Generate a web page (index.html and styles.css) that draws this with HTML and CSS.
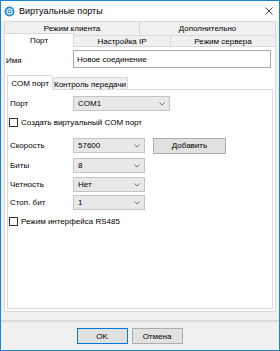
FILE: index.html
```html
<!DOCTYPE html>
<html lang="ru">
<head>
<meta charset="utf-8">
<title>Виртуальные порты</title>
<link rel="stylesheet" href="styles.css">
</head>
<body>
<div class="window">
  <div class="titlebar">
    <svg class="app-icon" width="11" height="11" viewBox="0 0 11 11">
      <circle cx="5.5" cy="5.5" r="5" fill="#2f86d6"/>
      <circle cx="5.5" cy="5.5" r="2.6" fill="none" stroke="#dbeeff" stroke-width="1.2"/>
      <circle cx="5.5" cy="5.5" r="1" fill="#ffffff"/>
    </svg>
    <span class="title">Виртуальные порты</span>
    <svg class="close" width="8" height="8" viewBox="0 0 8 8">
      <path d="M0.5 0.5 L7.5 7.5 M7.5 0.5 L0.5 7.5" stroke="#333" stroke-width="0.9"/>
    </svg>
  </div>
  <div class="content">
    <div class="tabrow row1">
      <div class="tab half">Режим клиента</div>
      <div class="tab half">Дополнительно</div>
    </div>
    <div class="tabrow row2">
      <div class="tab active t-port">Порт</div>
      <div class="tab t-ip">Настройка IP</div>
      <div class="tab t-srv">Режим сервера</div>
    </div>
    <div class="panel">
      <div class="name-row">
        <span class="name-label">Имя</span>
        <div class="textbox">Новое соединение</div>
      </div>
      <div class="itabrow">
        <div class="itab active">COM порт</div>
        <div class="itab">Контроль передачи</div>
      </div>
      <div class="ipanel">
        <div class="row r-port">
          <span class="lbl">Порт</span>
          <div class="select wide"><span>COM1</span><svg class="chev" width="6" height="4" viewBox="0 0 6 4"><path d="M0.5 0.5 L3 3 L5.5 0.5" fill="none" stroke="#666" stroke-width="0.9"/></svg></div>
        </div>
        <div class="row check r-virt">
          <span class="box"></span><span>Создать виртуальный COM порт</span>
        </div>
        <div class="row r-speed">
          <span class="lbl">Скорость</span>
          <div class="select"><span>57600</span><svg class="chev" width="6" height="4" viewBox="0 0 6 4"><path d="M0.5 0.5 L3 3 L5.5 0.5" fill="none" stroke="#666" stroke-width="0.9"/></svg></div>
          <div class="btn add">Добавить</div>
        </div>
        <div class="row r-bits">
          <span class="lbl">Биты</span>
          <div class="select"><span>8</span><svg class="chev" width="6" height="4" viewBox="0 0 6 4"><path d="M0.5 0.5 L3 3 L5.5 0.5" fill="none" stroke="#666" stroke-width="0.9"/></svg></div>
        </div>
        <div class="row r-parity">
          <span class="lbl">Четность</span>
          <div class="select"><span>Нет</span><svg class="chev" width="6" height="4" viewBox="0 0 6 4"><path d="M0.5 0.5 L3 3 L5.5 0.5" fill="none" stroke="#666" stroke-width="0.9"/></svg></div>
        </div>
        <div class="row r-stop">
          <span class="lbl">Стоп. бит</span>
          <div class="select"><span>1</span><svg class="chev" width="6" height="4" viewBox="0 0 6 4"><path d="M0.5 0.5 L3 3 L5.5 0.5" fill="none" stroke="#666" stroke-width="0.9"/></svg></div>
        </div>
        <div class="row check r-rs">
          <span class="box"></span><span>Режим интерфейса RS485</span>
        </div>
      </div>
    </div>
    <div class="separator"></div>
    <div class="buttons">
      <div class="btn default">OK</div>
      <div class="btn">Отмена</div>
    </div>
  </div>
</div>
</body>
</html>
```
FILE: styles.css
```css
* { box-sizing: border-box; }
html, body { margin: 0; padding: 0; }
body {
  font-family: "Liberation Sans", Arial, sans-serif;
  font-size: 8px;
  color: #000;
  background: #fff;
}
.window {
  width: 280px;
  height: 351px;
  border: 1px solid #1883d7;
  background: #f0f0f0;
  display: flex;
  flex-direction: column;
}
.titlebar {
  height: 20px;
  background: #fff;
  display: flex;
  align-items: center;
  padding-left: 3px;
  padding-right: 6px;
}
.app-icon { flex: none; }
.title {
  font-size: 9px;
  margin-left: 4px;
  flex: 1;
  color: #000;
}
.close { flex: none; }
.content {
  padding: 0 3px;
  display: flex;
  flex-direction: column;
}
.tabrow { display: flex; }
.tab {
  border: 1px solid #d9d9d9;
  border-bottom: 0;
  background: #f0f0f0;
  display: flex;
  align-items: center;
  justify-content: center;
  white-space: nowrap;
}
.row1 { height: 14px; }
.row1 .tab { height: 14px; }
.half { width: 136px; }
.row1 .half + .half { border-left: 0; }
.row2 { height: 11px; align-items: flex-start; }
.row2 .tab { height: 11px; }
.t-port { width: 70px; }
.t-ip { width: 97px; border-left: 0; }
.t-srv { width: 105px; border-left: 0; }
.row2 .tab.active {
  height: 14px;
  margin-top: -2px;
  background: #fff;
  position: relative;
  z-index: 1;
  padding-bottom: 1px;
}
.panel {
  width: 272px;
  height: 266px;
  border: 1px solid #d9d9d9;
  background: #fff;
  display: flex;
  flex-direction: column;
}
.name-row {
  display: flex;
  align-items: center;
  margin-top: 3px;
  height: 18px;
}
.name-label {
  width: 68px;
  padding-left: 1px;
  padding-top: 3px;
}
.textbox {
  width: 198px;
  height: 18px;
  border: 1px solid #a9a9a9;
  background: #fff;
  padding-left: 3px;
  display: flex;
  align-items: center;
}
.itabrow {
  display: flex;
  margin-top: 9px;
  margin-left: 2px;
  height: 12px;
  align-items: flex-start;
}
.itab {
  height: 12px;
  border: 1px solid #d9d9d9;
  border-bottom: 0;
  background: #f0f0f0;
  display: flex;
  align-items: center;
  justify-content: center;
  white-space: nowrap;
  padding-top: 1px;
}
.itab.active {
  width: 45px;
  height: 15px;
  margin-top: -2px;
  background: #fff;
  position: relative;
  z-index: 1;
  border-right: 0;
  padding-top: 0;
}
.itab + .itab { width: 76px; }
.ipanel {
  margin-left: 2px;
  width: 266px;
  height: 220px;
  border: 1px solid #d9d9d9;
  background: #fff;
  padding-top: 6px;
  display: flex;
  flex-direction: column;
}
.row {
  display: flex;
  align-items: center;
  height: 15px;
  flex: none;
}
.lbl {
  width: 65px;
  padding-left: 2px;
}
.select {
  width: 72px;
  height: 15px;
  border: 1px solid #c4c4c4;
  background: #e8e8e8;
  display: flex;
  align-items: center;
  justify-content: space-between;
  padding: 0 4px 0 4px;
}
.select.wide { width: 97px; }
.chev { flex: none; }
.check { height: 10px; padding-left: 1px; }
.box {
  width: 9px;
  height: 9px;
  border: 1px solid #333;
  background: #fff;
  margin-right: 3px;
}
.r-virt { margin-top: 6px; }
.r-speed { margin-top: 11px; }
.r-bits { margin-top: 5px; }
.r-parity { margin-top: 4px; }
.r-stop { margin-top: 3px; }
.r-rs { margin-top: 6px; }
.btn {
  height: 16px;
  border: 1px solid #adadad;
  background: #e1e1e1;
  display: flex;
  align-items: center;
  justify-content: center;
}
.add {
  width: 73px;
  margin-left: 8px;
}
.separator {
  margin: 8px -3px 0;
  height: 2px;
  background: #dadada;
}
.buttons {
  display: flex;
  justify-content: center;
  gap: 4px;
  margin-top: 6px;
  padding-right: 21px;
}
.buttons .btn { width: 51px; }
.btn.default { border-color: #0078d7; }
```
